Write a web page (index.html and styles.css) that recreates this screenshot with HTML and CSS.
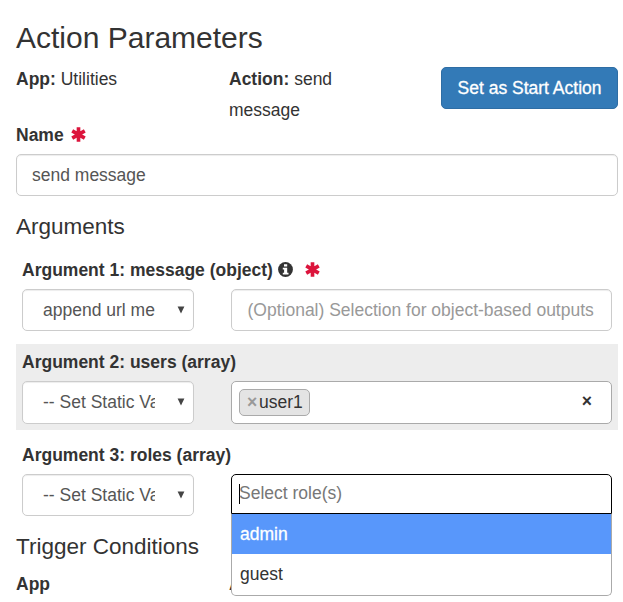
FILE: index.html
```html
<!DOCTYPE html>
<html lang="en">
<head>
<meta charset="utf-8">
<title>Action Parameters</title>
<link rel="stylesheet" href="styles.css">
</head>
<body>
<svg class="sprite" aria-hidden="true">
  <symbol id="asterisk" viewBox="0 0 16 16">
    <g stroke="currentColor" stroke-width="3.9" stroke-linejoin="round">
      <path d="M8 .2v15.6M1.3 4.1l13.4 7.8M14.7 4.1l-13.4 7.8"/>
    </g>
  </symbol>
  <symbol id="info" viewBox="0 0 16 16">
    <circle cx="8" cy="8" r="7.9" fill="currentColor"/>
    <path fill="#fff" d="M6.4 2.3h3.4v2.4H6.4zM5.1 6.2h4.7v5.2h1.4v1.9H5.1v-1.9h1.4V8.1H5.1z"/>
  </symbol>
  <symbol id="arrow" viewBox="0 0 8 8">
    <path fill="#444" d="M.6.5h6.8L4 7.6z"/>
  </symbol>
</svg>
<main class="panel">
  <h3 class="title">Action Parameters</h3>
  <div class="summary">
    <div class="cell"><b>App:</b> Utilities</div>
    <div class="cell cell-action"><b>Action:</b> send message</div>
    <button class="start">Set as Start Action</button>
  </div>
  <label class="label">Name <svg class="icon required"><use href="#asterisk"/></svg></label>
  <div class="control name">send message</div>

  <h4 class="heading">Arguments</h4>
  <section class="argument">
    <label class="label">Argument 1: message (object)<svg class="icon info"><use href="#info"/></svg><svg class="icon required"><use href="#asterisk"/></svg></label>
    <div class="fields">
      <div class="control select"><span class="value">append url me</span><svg class="arrow"><use href="#arrow"/></svg></div>
      <div class="control placeholder">(Optional) Selection for object-based outputs</div>
    </div>
  </section>
  <section class="argument shaded">
    <label class="label">Argument 2: users (array)</label>
    <div class="fields">
      <div class="control select"><span class="value">-- Set Static Value</span><svg class="arrow"><use href="#arrow"/></svg></div>
      <div class="multi">
        <span class="tag"><span class="remove">×</span>user1</span>
        <span class="clear">×</span>
      </div>
    </div>
  </section>
  <section class="argument">
    <label class="label">Argument 3: roles (array)</label>
    <div class="fields">
      <div class="control select"><span class="value">-- Set Static Value</span><svg class="arrow"><use href="#arrow"/></svg></div>
      <div class="multi open">
        <span class="caret"></span><span class="hint">Select role(s)</span>
        <div class="menu">
          <div class="option active">admin</div>
          <div class="option">guest</div>
        </div>
      </div>
    </div>
  </section>

  <h4 class="heading trigger">Trigger Conditions</h4>
  <div class="columns"><b>App</b><b>Action</b></div>
</main>
</body>
</html>
```
FILE: styles.css
```css
* { box-sizing: border-box; }
body {
  margin: 0;
  height: 602px;
  overflow: hidden;
  background: #fff;
  color: #333;
  font: 17.5px/25px "Liberation Sans", Arial, sans-serif;
}
.sprite { display: none; }
.panel { width: 602px; margin-left: 16px; padding-top: 21px; }
.title { margin: 0; font-size: 30px; font-weight: 400; line-height: 33px; }
.summary {
  display: grid;
  grid-template-columns: 213px 150px 1fr;
  align-items: start;
  height: 59px;
  margin-top: 10px;
  line-height: 31px;
}
.cell-action { width: 120px; }
.start {
  justify-self: end;
  width: 177px;
  height: 42px;
  margin-top: 3px;
  padding: 0;
  border: 1px solid #2e6da4;
  border-radius: 5px;
  background: #337ab7;
  color: #fff;
  font: inherit;
  -webkit-text-stroke: .3px #fff;
}
.label { display: flex; align-items: center; height: 25px; font-weight: 700; }
.icon { width: 15px; height: 15px; flex: none; margin-bottom: 2px; }
.required { margin-left: 7px; color: #dc143c; }
.info { margin-left: 5px; }
.info + .required { margin-left: 12px; }
.control {
  height: 42px;
  padding: 0 15px;
  border: 1px solid #ccc;
  border-radius: 5px;
  background: #fff;
  box-shadow: inset 0 1px 1px rgba(0, 0, 0, .075);
  color: #555;
  line-height: 40px;
  white-space: nowrap;
}
.name { margin-top: 6px; }
.heading { margin: 18px 0 12px; font-size: 22.5px; font-weight: 400; line-height: 26px; }
.argument { padding: 6px; }
.argument + .argument { margin-top: 7px; }
.shaded { background: #ededed; }
.fields { display: grid; grid-template-columns: 172px 381px; column-gap: 37px; margin-top: 6px; }
.shaded .control, .shaded .multi { height: 43px; }
.shaded .control { padding-bottom: 1px; }
.select { display: flex; align-items: center; padding: 0 8px 0 20px; }
.value { width: 112px; overflow: hidden; }
.arrow { width: 8px; height: 8px; margin-left: auto; }
.placeholder { padding-left: 15.5px; color: #999; }
.multi {
  position: relative;
  display: flex;
  align-items: center;
  padding: 0 19px 0 7px;
  border: 1px solid #aaa;
  border-radius: 5px;
  background: #fff;
}
.tag {
  display: flex;
  align-items: center;
  width: 71px;
  height: 27px;
  padding-left: 7px;
  border: 1px solid #aaa;
  border-radius: 5px;
  background: #e4e4e4;
}
.remove { width: 12px; color: #999; font-weight: 700; }
.clear { margin-left: auto; margin-bottom: 3px; font-weight: 700; }
.open { height: 40px; border-color: #000; border-radius: 5px 5px 0 0; }
.caret { width: 1px; height: 20px; background: #000; }
.hint { margin: -2px 0 0 -1px; color: #777; }
.menu {
  position: absolute;
  z-index: 1;
  top: 39px;
  left: -1px;
  width: 381px;
  height: 82px;
  border: 1px solid #aaa;
  border-top: 0;
  border-radius: 0 0 5px 5px;
  background: #fff;
}
.option { height: 40px; padding-left: 8px; line-height: 40px; }
.active { background: #5897fb; color: #fff; -webkit-text-stroke: .3px #fff; }
.trigger { margin: 12px 0; }
.columns { display: grid; grid-template-columns: 213px 1fr; }
```
